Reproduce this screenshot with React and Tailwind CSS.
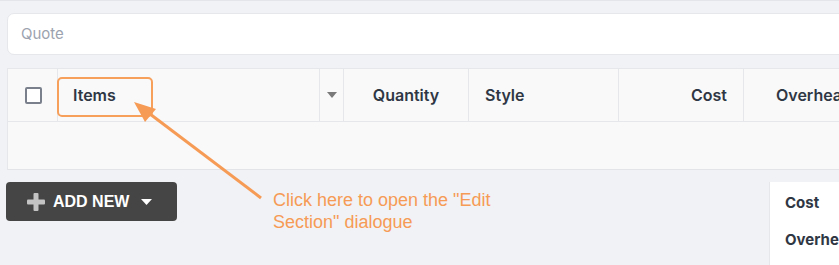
import React from "react";

export default function App() {
  const inter = { fontFamily: "Inter, 'Noto Sans', sans-serif" };
  const arial = { fontFamily: "'Liberation Sans', Arial, sans-serif" };
  return (
    <div className="relative w-[839px] h-[265px] overflow-hidden bg-[#f1f2f6] border-t border-[#e3e5ea]" style={inter}>
      <div className="pl-[7px] pt-[12px]">
        {/* Quote input */}
        <div className="h-[42px] w-[860px] rounded-[7px] bg-white border border-[#e5e7eb] flex items-center pl-[13px]">
          <span className="text-[15px] text-[#9ca3af]">Quote</span>
        </div>

        {/* Table */}
        <div className="mt-[13px] w-[860px] border-l border-[#e6e7ea]">
          <div className="h-[54px] flex bg-[#f9f9fa] border-b border-t border-[#e6e7ea] text-[16px] font-semibold text-[#2f3744]">
            <div className="w-[50px] shrink-0 border-r border-[#e6e7ea] flex items-center justify-center">
              <div className="w-[17px] h-[17px] rounded-[2px] border-2 border-[#7b818c] bg-white ml-[2px]" />
            </div>
            <div className="w-[262px] shrink-0 flex items-center pl-[15px] border-r border-[#e6e7ea]">Items</div>
            <div className="w-[24px] shrink-0 flex items-center justify-center border-r border-[#e6e7ea]">
              <svg width="10" height="6" viewBox="0 0 10 6"><path d="M0 0 L10 0 L5 6 Z" fill="#7a7a7a" /></svg>
            </div>
            <div className="w-[125px] shrink-0 flex items-center justify-center border-r border-[#e6e7ea]">Quantity</div>
            <div className="w-[150px] shrink-0 flex items-center pl-[16px] border-r border-[#e6e7ea]">Style</div>
            <div className="w-[125px] shrink-0 flex items-center justify-end pr-[16px] border-r border-[#e6e7ea]">Cost</div>
            <div className="flex-1 flex items-center pl-[32px]">Overhead</div>
          </div>
          <div className="h-[48px] bg-[#f9f9fa] border-b border-[#e2e4e8]" />
        </div>

        {/* Bottom row */}
        <div className="mt-[12px] flex items-start w-[900px]">
          <div className="shrink-0 -ml-px w-[171px] h-[39px] rounded-[4px] bg-[#454545] flex items-center pl-[21px]">
            <svg width="18" height="18" viewBox="0 0 18 18">
              <rect x="6.5" y="0" width="5" height="18" rx="1" fill="#c4c4c4" />
              <rect x="0" y="6.5" width="18" height="5" rx="1" fill="#c4c4c4" />
            </svg>
            <span className="ml-[8px] text-[16px] font-bold text-white" style={arial}>ADD NEW</span>
            <svg className="ml-[12px]" width="11" height="6" viewBox="0 0 11 6"><path d="M0 0 L11 0 L5.5 6 Z" fill="#ffffff" /></svg>
          </div>
          <div className="shrink-0 ml-[592px] w-[100px] h-[90px] bg-white border-l border-[#e6e7ea] pl-[15px] pt-[12px] text-[15px] font-bold text-[#2f3744]">
            <div className="h-[18px] leading-[18px]">Cost</div>
            <div className="mt-[19px] h-[18px] leading-[18px]">Overhead</div>
          </div>
        </div>
      </div>

      {/* Highlight box */}
      <div className="absolute left-[57px] top-[76px] w-[96px] h-[40px] rounded-[5px] border-2 border-[#f6a05c]" />

      {/* Arrow */}
      <svg className="absolute left-0 top-0" width="839" height="265" viewBox="0 0 839 265">
        <line x1="261" y1="197" x2="150" y2="113" stroke="#f69b55" strokeWidth="3" />
        <path d="M134 101 L156 108 L145 121 Z" fill="#f69b55" />
      </svg>

      {/* Annotation */}
      <div className="absolute left-[273px] top-[188px] text-[18px] leading-[22px] text-[#f69b55]" style={arial}>
        Click here to open the "Edit<br />Section" dialogue
      </div>
    </div>
  );
}
